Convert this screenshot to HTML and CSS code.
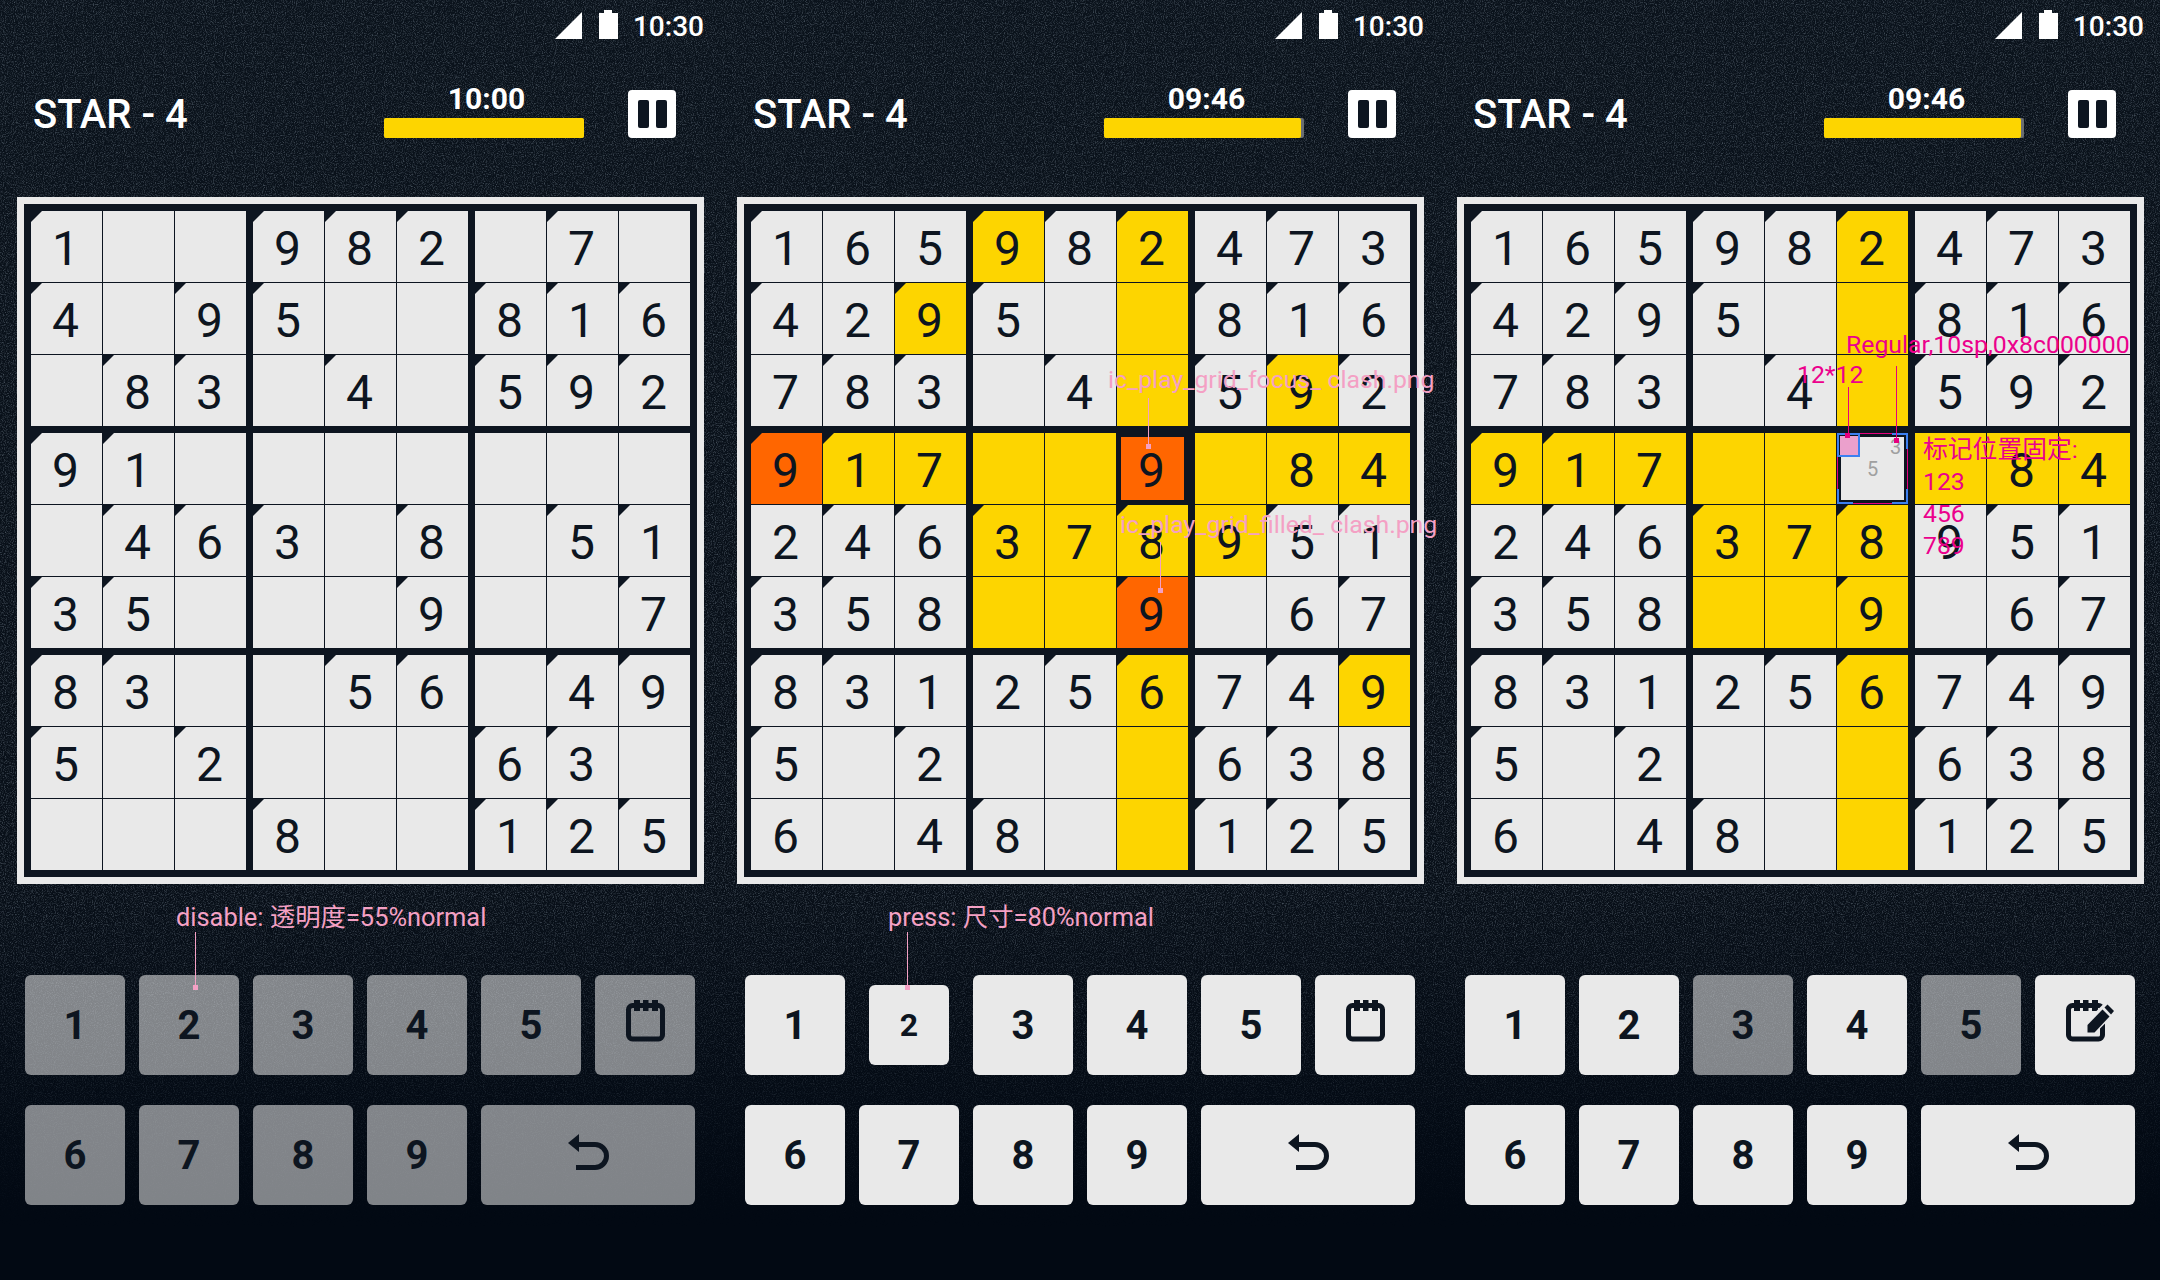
FILE: index.html
```html
<!DOCTYPE html>
<html lang="en">
<head>
  <meta charset="UTF-8">
  <title>Sudoku play states</title>
  <link rel="stylesheet" href="styles.css">
</head>
<body>

  <!-- paper grain over the dark background -->
  <svg class="grain" width="2160" height="1280">
    <filter id="noise">
      <feTurbulence type="fractalNoise" baseFrequency="0.9" numOctaves="2" seed="4"/>
      <feColorMatrix values="0 0 0 0 0.45  0 0 0 0 0.55  0 0 0 0 0.65  0 0 0 0.8 -0.36"/>
    </filter>
    <rect width="2160" height="1280" filter="url(#noise)"/>
  </svg>

  <!-- disabled keys -->
  <section class="panel">
    <div class="status">
      <svg class="signal" width="27" height="27"><polygon points="27,0 27,27 0,27" fill="#fff"/></svg>
      <svg class="battery" width="19" height="29"><path d="M5 0h8v3h6v26H0V3h5z" fill="#fff"/></svg>
      <span class="clock">10:30</span>
    </div>
    <header class="topbar">
      <h1 class="title">STAR - 4</h1>
      <div class="timer">
        <span class="timer-text">10:00</span>
        <div class="track"><div class="fill" style="width:100%"></div></div>
      </div>
      <svg class="pause" width="48" height="48"><rect width="48" height="48" rx="4" fill="#fff"/><rect x="10" y="10" width="11" height="28" rx="2" fill="#0d1520"/><rect x="28" y="10" width="11" height="28" rx="2" fill="#0d1520"/></svg>
    </header>

    <div class="board">
      <div class="row"><span class="c g">1</span><span class="c"></span><span class="c"></span><span class="c g">9</span><span class="c g">8</span><span class="c g">2</span><span class="c"></span><span class="c g">7</span><span class="c"></span></div>
      <div class="row"><span class="c g">4</span><span class="c"></span><span class="c g">9</span><span class="c g">5</span><span class="c"></span><span class="c"></span><span class="c g">8</span><span class="c g">1</span><span class="c g">6</span></div>
      <div class="row"><span class="c"></span><span class="c g">8</span><span class="c g">3</span><span class="c"></span><span class="c g">4</span><span class="c"></span><span class="c g">5</span><span class="c g">9</span><span class="c g">2</span></div>
      <div class="row"><span class="c g">9</span><span class="c g">1</span><span class="c"></span><span class="c"></span><span class="c"></span><span class="c"></span><span class="c"></span><span class="c"></span><span class="c"></span></div>
      <div class="row"><span class="c"></span><span class="c g">4</span><span class="c g">6</span><span class="c g">3</span><span class="c"></span><span class="c g">8</span><span class="c"></span><span class="c g">5</span><span class="c g">1</span></div>
      <div class="row"><span class="c g">3</span><span class="c g">5</span><span class="c"></span><span class="c"></span><span class="c"></span><span class="c g">9</span><span class="c"></span><span class="c"></span><span class="c g">7</span></div>
      <div class="row"><span class="c g">8</span><span class="c g">3</span><span class="c"></span><span class="c"></span><span class="c g">5</span><span class="c g">6</span><span class="c"></span><span class="c g">4</span><span class="c g">9</span></div>
      <div class="row"><span class="c g">5</span><span class="c"></span><span class="c g">2</span><span class="c"></span><span class="c"></span><span class="c"></span><span class="c g">6</span><span class="c g">3</span><span class="c"></span></div>
      <div class="row"><span class="c"></span><span class="c"></span><span class="c"></span><span class="c g">8</span><span class="c"></span><span class="c"></span><span class="c g">1</span><span class="c g">2</span><span class="c g">5</span></div>
    </div>

    <div class="keypad">
      <div class="key off">1</div><div class="key off">2</div><div class="key off">3</div><div class="key off">4</div><div class="key off">5</div>
      <div class="key off">
        <svg class="ico-note" width="40" height="42"><rect x="2.5" y="5.5" width="34" height="33.5" rx="4" fill="none" stroke="#0d1520" stroke-width="5"/><rect x="8" width="6" height="11" fill="#0d1520"/><rect x="17" width="5.5" height="11" fill="#0d1520"/><rect x="26" width="6" height="11" fill="#0d1520"/></svg>
      </div>
      <div class="key off">6</div><div class="key off">7</div><div class="key off">8</div><div class="key off">9</div>
      <div class="key off wide">
        <svg class="ico-undo" width="42" height="36"><polygon points="0,9 11,0 11,18" fill="#0d1520"/><path d="M9 10.5H27a11.5 11.5 0 0 1 0 23H8" fill="none" stroke="#0d1520" stroke-width="5"/></svg>
      </div>
    </div>

    <span class="note state pink note-state-a">disable: 透明度=55%normal</span>
    <i class="lead pink-bg lead-state-a"></i><i class="dot pink-bg dot-state-a"></i>
  </section>

  <!-- clash highlight, pressed key -->
  <section class="panel">
    <div class="status">
      <svg class="signal" width="27" height="27"><polygon points="27,0 27,27 0,27" fill="#fff"/></svg>
      <svg class="battery" width="19" height="29"><path d="M5 0h8v3h6v26H0V3h5z" fill="#fff"/></svg>
      <span class="clock">10:30</span>
    </div>
    <header class="topbar">
      <h1 class="title">STAR - 4</h1>
      <div class="timer">
        <span class="timer-text">09:46</span>
        <div class="track"><div class="fill" style="width:98.5%"></div></div>
      </div>
      <svg class="pause" width="48" height="48"><rect width="48" height="48" rx="4" fill="#fff"/><rect x="10" y="10" width="11" height="28" rx="2" fill="#0d1520"/><rect x="28" y="10" width="11" height="28" rx="2" fill="#0d1520"/></svg>
    </header>

    <div class="board">
      <div class="row"><span class="c g">1</span><span class="c">6</span><span class="c">5</span><span class="c g hl">9</span><span class="c g">8</span><span class="c g hl">2</span><span class="c">4</span><span class="c g">7</span><span class="c">3</span></div>
      <div class="row"><span class="c g">4</span><span class="c">2</span><span class="c g hl">9</span><span class="c g">5</span><span class="c"></span><span class="c hl"></span><span class="c g">8</span><span class="c g">1</span><span class="c g">6</span></div>
      <div class="row"><span class="c">7</span><span class="c g">8</span><span class="c g">3</span><span class="c"></span><span class="c g">4</span><span class="c hl"></span><span class="c g">5</span><span class="c g hl">9</span><span class="c g">2</span></div>
      <div class="row"><span class="c g clash">9</span><span class="c g hl">1</span><span class="c hl">7</span><span class="c hl"></span><span class="c hl"></span><span class="c clash focus">9</span><span class="c hl"></span><span class="c hl">8</span><span class="c hl">4</span></div>
      <div class="row"><span class="c">2</span><span class="c g">4</span><span class="c g">6</span><span class="c g hl">3</span><span class="c hl">7</span><span class="c g hl">8</span><span class="c hl">9</span><span class="c g">5</span><span class="c g">1</span></div>
      <div class="row"><span class="c g">3</span><span class="c g">5</span><span class="c">8</span><span class="c hl"></span><span class="c hl"></span><span class="c g clash">9</span><span class="c"></span><span class="c">6</span><span class="c g">7</span></div>
      <div class="row"><span class="c g">8</span><span class="c g">3</span><span class="c">1</span><span class="c">2</span><span class="c g">5</span><span class="c g hl">6</span><span class="c">7</span><span class="c g">4</span><span class="c g hl">9</span></div>
      <div class="row"><span class="c g">5</span><span class="c"></span><span class="c g">2</span><span class="c"></span><span class="c"></span><span class="c hl"></span><span class="c g">6</span><span class="c g">3</span><span class="c">8</span></div>
      <div class="row"><span class="c">6</span><span class="c"></span><span class="c">4</span><span class="c g">8</span><span class="c"></span><span class="c hl"></span><span class="c g">1</span><span class="c g">2</span><span class="c g">5</span></div>
    </div>

    <div class="keypad">
      <div class="key">1</div><div class="key pressed">2</div><div class="key">3</div><div class="key">4</div><div class="key">5</div>
      <div class="key">
        <svg class="ico-note" width="40" height="42"><rect x="2.5" y="5.5" width="34" height="33.5" rx="4" fill="none" stroke="#0d1520" stroke-width="5"/><rect x="8" width="6" height="11" fill="#0d1520"/><rect x="17" width="5.5" height="11" fill="#0d1520"/><rect x="26" width="6" height="11" fill="#0d1520"/></svg>
      </div>
      <div class="key">6</div><div class="key">7</div><div class="key">8</div><div class="key">9</div>
      <div class="key wide">
        <svg class="ico-undo" width="42" height="36"><polygon points="0,9 11,0 11,18" fill="#0d1520"/><path d="M9 10.5H27a11.5 11.5 0 0 1 0 23H8" fill="none" stroke="#0d1520" stroke-width="5"/></svg>
      </div>
    </div>

    <span class="note pink note-focus">ic_play_grid_focus_ clash.png</span>
    <i class="lead pink-bg lead-focus"></i><i class="dot pink-bg dot-focus"></i>
    <span class="note pink note-filled">ic_play_grid_filled_ clash.png</span>
    <i class="lead pink-bg lead-filled"></i><i class="dot pink-bg dot-filled"></i>
    <span class="note state pink note-state-b">press: 尺寸=80%normal</span>
    <i class="lead pink-bg lead-state-b"></i><i class="dot pink-bg dot-state-b"></i>
  </section>

  <!-- pencil marks -->
  <section class="panel">
    <div class="status">
      <svg class="signal" width="27" height="27"><polygon points="27,0 27,27 0,27" fill="#fff"/></svg>
      <svg class="battery" width="19" height="29"><path d="M5 0h8v3h6v26H0V3h5z" fill="#fff"/></svg>
      <span class="clock">10:30</span>
    </div>
    <header class="topbar">
      <h1 class="title">STAR - 4</h1>
      <div class="timer">
        <span class="timer-text">09:46</span>
        <div class="track"><div class="fill" style="width:98.5%"></div></div>
      </div>
      <svg class="pause" width="48" height="48"><rect width="48" height="48" rx="4" fill="#fff"/><rect x="10" y="10" width="11" height="28" rx="2" fill="#0d1520"/><rect x="28" y="10" width="11" height="28" rx="2" fill="#0d1520"/></svg>
    </header>

    <div class="board">
      <div class="row"><span class="c g">1</span><span class="c">6</span><span class="c">5</span><span class="c g">9</span><span class="c g">8</span><span class="c g hl">2</span><span class="c">4</span><span class="c g">7</span><span class="c">3</span></div>
      <div class="row"><span class="c g">4</span><span class="c">2</span><span class="c g">9</span><span class="c g">5</span><span class="c"></span><span class="c hl"></span><span class="c g">8</span><span class="c g">1</span><span class="c g">6</span></div>
      <div class="row"><span class="c">7</span><span class="c g">8</span><span class="c g">3</span><span class="c"></span><span class="c g">4</span><span class="c hl"></span><span class="c g">5</span><span class="c g">9</span><span class="c g">2</span></div>
      <div class="row"><span class="c g hl">9</span><span class="c g hl">1</span><span class="c hl">7</span><span class="c hl"></span><span class="c hl"></span>
        <span class="c focus notes"><b></b><b></b><b>3</b><b></b><b>5</b><b></b><b></b><b></b><b></b>
          <svg class="measure" width="71" height="71">
            <rect x="0.5" y="0.5" width="70" height="70" fill="none" stroke="#e6007e"/>
            <rect x="3" y="3" width="19" height="20" fill="#eba0cc"/>
            <rect x="1" y="1" width="21" height="22" fill="none" stroke="#3d80f0" stroke-width="2"/>
            <path d="M55 1H70V16M1 56V70H16M55 70H70V56" fill="none" stroke="#3d80f0" stroke-width="2"/>
          </svg>
        </span>
        <span class="c hl"></span><span class="c hl">8</span><span class="c hl">4</span></div>
      <div class="row"><span class="c">2</span><span class="c g">4</span><span class="c g">6</span><span class="c g hl">3</span><span class="c hl">7</span><span class="c g hl">8</span><span class="c">9</span><span class="c g">5</span><span class="c g">1</span></div>
      <div class="row"><span class="c g">3</span><span class="c g">5</span><span class="c">8</span><span class="c hl"></span><span class="c hl"></span><span class="c g hl">9</span><span class="c"></span><span class="c">6</span><span class="c g">7</span></div>
      <div class="row"><span class="c g">8</span><span class="c g">3</span><span class="c">1</span><span class="c">2</span><span class="c g">5</span><span class="c g hl">6</span><span class="c">7</span><span class="c g">4</span><span class="c g">9</span></div>
      <div class="row"><span class="c g">5</span><span class="c"></span><span class="c g">2</span><span class="c"></span><span class="c"></span><span class="c hl"></span><span class="c g">6</span><span class="c g">3</span><span class="c">8</span></div>
      <div class="row"><span class="c">6</span><span class="c"></span><span class="c">4</span><span class="c g">8</span><span class="c"></span><span class="c hl"></span><span class="c g">1</span><span class="c g">2</span><span class="c g">5</span></div>
    </div>

    <div class="keypad">
      <div class="key">1</div><div class="key">2</div><div class="key off">3</div><div class="key">4</div><div class="key off">5</div>
      <div class="key">
        <svg class="ico-edit" width="48" height="42"><rect x="2.5" y="5.5" width="34" height="33.5" rx="4" fill="none" stroke="#0d1520" stroke-width="5"/><rect x="8" width="6" height="11" fill="#0d1520"/><rect x="17" width="5.5" height="11" fill="#0d1520"/><rect x="26" width="6" height="11" fill="#0d1520"/><path d="M24 28L44 8" stroke="#e9e9e9" stroke-width="15"/><polygon points="21.5,25 36.5,9.5 43.5,16.5 28.5,32.5 21.5,32.5" fill="#0d1520"/><polygon points="38.5,7.5 41.5,4.5 48,11 45,14.5" fill="#0d1520"/></svg>
      </div>
      <div class="key">6</div><div class="key">7</div><div class="key">8</div><div class="key">9</div>
      <div class="key wide">
        <svg class="ico-undo" width="42" height="36"><polygon points="0,9 11,0 11,18" fill="#0d1520"/><path d="M9 10.5H27a11.5 11.5 0 0 1 0 23H8" fill="none" stroke="#0d1520" stroke-width="5"/></svg>
      </div>
    </div>

    <span class="note mag note-regular">Regular,10sp,0x8c000000</span>
    <i class="lead mag-bg lead-regular"></i><i class="dot mag-bg dot-regular"></i>
    <span class="note mag note-size">12*12</span>
    <i class="lead mag-bg lead-size"></i><i class="dot mag-bg dot-size"></i>
    <span class="note mag note-fixed">标记位置固定:<br>123<br>456<br>789</span>
  </section>

</body>
</html>
```

FILE: styles.css
```css
* {
  box-sizing: border-box;
}

body {
  margin: 0;
  width: 2160px;
  height: 1280px;
  overflow: hidden;
  position: relative;
  display: flex;
  font-family: Roboto, "Noto Sans CJK SC", sans-serif;
  color: #0d1520;
  background: linear-gradient(#0a121b 0%, #080f18 70%, #020913 94%, #020913 100%);
}

.grain {
  position: absolute;
  top: 0;
  left: 0;
  -webkit-mask-image: linear-gradient(black 70%, transparent 96%);
  mask-image: linear-gradient(black 70%, transparent 96%);
}

.panel {
  position: relative;
  width: 720px;
  height: 1280px;
  flex: none;
}

/* Status bar */
.status {
  height: 90px;
  padding: 10px 16px 0 0;
  display: flex;
  justify-content: flex-end;
  align-items: flex-start;
}

.signal {
  margin-top: 2px;
  margin-right: 17px;
}

.battery {
  margin-right: 15px;
}

.clock {
  font-size: 28px;
  line-height: 33px;
  font-weight: 500;
  color: white;
}

/* Top bar */
.topbar {
  height: 48px;
  margin: 0 44px 59px 33px;
  display: flex;
  align-items: center;
}

.title {
  margin: 0 auto 0 0;
  font-size: 40px;
  font-weight: 500;
  color: white;
}

.timer {
  width: 200px;
  height: 48px;
  margin-right: 44px;
  display: flex;
  flex-direction: column;
  justify-content: flex-end;
}

.timer-text {
  flex: none;
  padding-left: 5px;
  margin-bottom: 5px;
  text-align: center;
  font-size: 30px;
  line-height: 28px;
  font-weight: 700;
  color: white;
}

.track {
  flex: none;
  height: 20px;
  border-radius: 2px;
  background: #6a6d70;
}

.fill {
  height: 100%;
  border-radius: 2px;
  background: #fdd500;
}

/* Board */
.board {
  width: 687px;
  margin-left: 17px;
  padding: 7px;
  border: 7px solid #e9e9e9;
  background: #0d1520;
  display: flex;
  flex-direction: column;
  gap: 1px;
}

.row {
  display: flex;
  gap: 1px;
}

.row:nth-child(3), .row:nth-child(6) {
  margin-bottom: 6px;
}

.c {
  position: relative;
  width: 71px;
  height: 71px;
  flex: none;
  display: flex;
  align-items: center;
  justify-content: center;
  padding: 3px 2px 0 0;
  font-size: 48px;
  font-weight: 450;
  background: #e9e9e9;
}

.c:nth-child(3), .c:nth-child(6) {
  margin-right: 6px;
}

.g::before {
  content: "";
  position: absolute;
  top: 0;
  left: 0;
  width: 11px;
  height: 11px;
  background: #0d1520;
  clip-path: polygon(0 0, 100% 0, 0 100%);
}

.hl {
  background: #fdd500;
}

.clash {
  background: #ff6600;
}

.focus {
  box-shadow: inset 0 0 0 4px #0d1520;
}

.notes {
  display: grid;
  grid-template-columns: repeat(3, 23px);
  grid-template-rows: repeat(3, 22px);
  justify-content: center;
  align-content: center;
  padding: 0;
  font-size: 20px;
  color: #a0a0a0;
}

.notes b {
  font-weight: 400;
  line-height: 22px;
  text-align: center;
}

.measure {
  position: absolute;
  top: 0;
  left: 0;
}

/* Keypad */
.keypad {
  margin: 91px 0 0 25px;
  display: grid;
  grid-template-columns: repeat(6, 100px);
  grid-auto-rows: 100px;
  gap: 30px 14px;
}

.key {
  display: flex;
  align-items: center;
  justify-content: center;
  border-radius: 6px;
  background: #e9e9e9;
  font-size: 40px;
  font-weight: 700;
}

.key.off {
  background: rgba(233, 233, 233, 0.55);
}

.key.wide {
  grid-column: span 2;
}

.key.pressed {
  width: 80px;
  height: 80px;
  place-self: center;
  font-size: 32px;
}

.ico-note {
  margin: 0 0 8px 1px;
}

.ico-edit {
  margin: 0 0 8px 9px;
}

.ico-undo {
  margin: 0 0 6px 1px;
}

/* Spec annotations drawn over the design */
.note {
  position: absolute;
  font-size: 24.8px;
  line-height: 32px;
  white-space: nowrap;
}

.note.state {
  font-size: 25.4px;
}

.pink {
  color: #f4a0c4;
}

.mag {
  color: #ec008c;
}

.pink-bg {
  background: #f4a0c4;
}

.mag-bg {
  background: #e6007e;
}

.lead {
  position: absolute;
  width: 1px;
}

.dot {
  position: absolute;
  width: 5px;
  height: 5px;
}

.note-state-a { left: 176px; top: 901px; }
.lead-state-a { left: 195px; top: 932px; height: 54px; }
.dot-state-a { left: 193px; top: 985px; }

.note-state-b { left: 168px; top: 901px; }
.lead-state-b { left: 187px; top: 932px; height: 54px; }
.dot-state-b { left: 185px; top: 985px; }

.note-focus { left: 388px; top: 364px; }
.lead-focus { left: 428px; top: 398px; height: 47px; }
.dot-focus { left: 426px; top: 444px; }

.note-filled { left: 400px; top: 509px; }
.lead-filled { left: 440px; top: 542px; height: 46px; }
.dot-filled { left: 438px; top: 588px; }

.note-regular { left: 406px; top: 329px; }
.lead-regular { left: 456px; top: 366px; height: 74px; }
.dot-regular { left: 454px; top: 438px; }

.note-size { left: 357px; top: 359px; }
.lead-size { left: 408px; top: 387px; height: 48px; }
.dot-size { left: 405px; top: 433px; }

.note-fixed { left: 483px; top: 434px; }
```
